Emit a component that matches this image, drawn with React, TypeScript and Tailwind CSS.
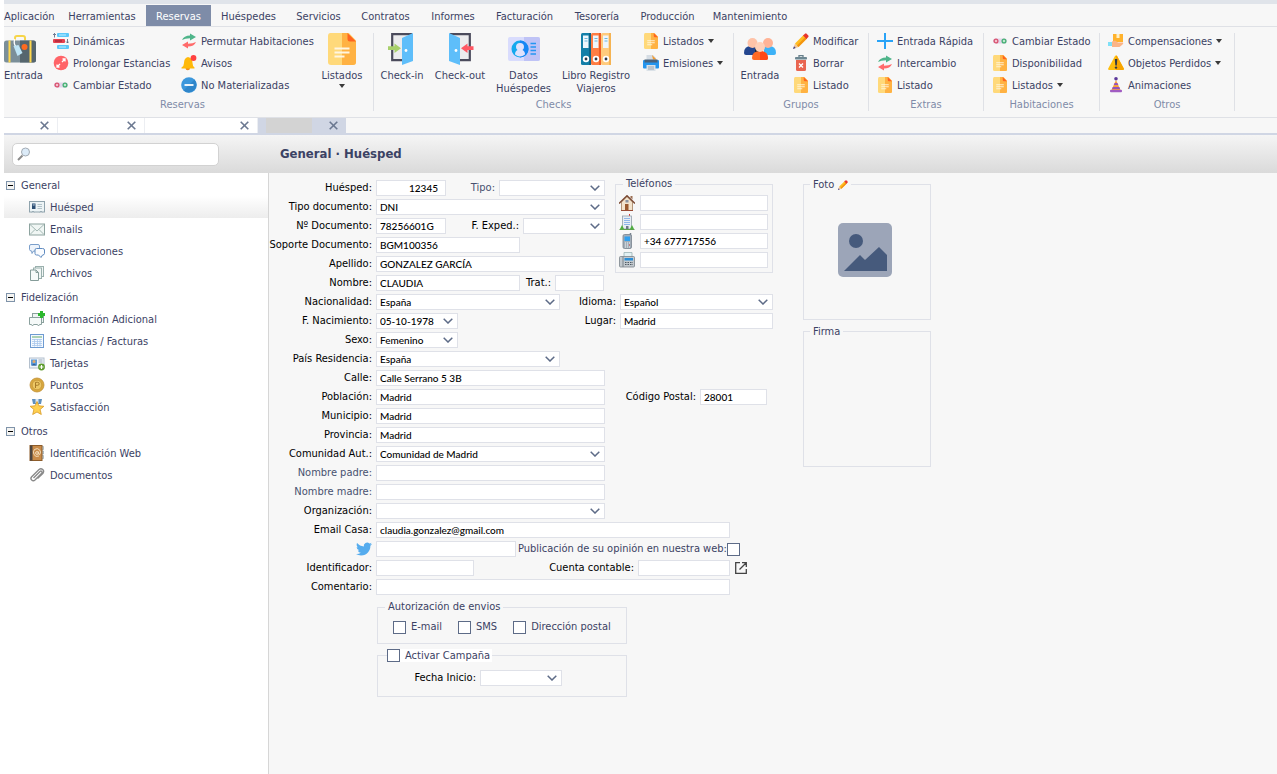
import { useState } from 'react';
import type { ReactNode } from 'react';
import clsx from 'clsx';

/* ---------- ribbon icons ---------- */

const svg16 = 'w-4 h-4 shrink-0';
const svg32 = 'w-8 h-8 shrink-0';

function SuitcaseIcon() {
  return (
    <svg viewBox="0 0 32 32" className={svg32}>
      <path d="M11 7.500V5q0-2 2-2h6q2 0 2 2v2.500" fill="none" stroke="#f6d54a" strokeWidth="2" />
      <rect x="0" y="7.500" width="32" height="22" rx="2.500" fill="#7b8f99" />
      <path d="M16 7.500h13.500q2.500 0 2.500 2.500v17q0 2.500-2.500 2.500H16z" fill="#56666e" />
      <path d="M4.500 7.500h2v22h-2zM25.500 7.500h2v22h-2z" fill="#ffd84d" />
      <path d="M11 6q-2 4 1 8" fill="none" stroke="#fff" strokeWidth="1.300" />
      <path d="M9.500 13l5-1 4 8-5 3z" fill="#bfe6f7" />
      <circle cx="20.500" cy="14" r="3" fill="#ff6a1f" />
    </svg>
  );
}

function DynamicIcon() {
  return (
    <svg viewBox="0 0 16 16" className={svg16}>
      <rect x="4" y="0" width="12" height="4" rx="1" fill="#5bc8fa" />
      <rect x="0" y="6" width="12" height="4" rx="1" fill="#e4404f" />
      <rect x="4" y="12" width="12" height="4" rx="1" fill="#5bc8fa" />
      <path d="M6 2h7M6 14h7" stroke="#c4eefe" />
      <path d="M2 8h7" stroke="#8f1f35" />
      <path d="M1.500 4.500v-4M0 2l1.500-1.500L3 2M14.500 6v4M13 8.500l1.500 1.500L16 8.500" fill="none" stroke="#4c5a78" strokeWidth=".8" />
    </svg>
  );
}

function ExpandIcon() {
  return (
    <svg viewBox="0 0 16 16" className={svg16}>
      <circle cx="8" cy="8" r="7.300" fill="#ff6468" />
      <path d="M9 7l3-3M9.500 4H12v2.500M7 9l-3 3M4 9.500V12h2.500" fill="none" stroke="#fff" strokeWidth="1.300" />
    </svg>
  );
}

function StateIcon() {
  return (
    <svg viewBox="0 0 16 16" className={svg16}>
      <rect x="1" y="5.500" width="14" height="5" rx="2.500" fill="#e3d5ec" />
      <circle cx="4" cy="8" r="1.900" fill="#f3c1cc" stroke="#d9536f" strokeWidth="1.300" />
      <circle cx="12" cy="8" r="1.900" fill="#bfe8cf" stroke="#45b074" strokeWidth="1.300" />
    </svg>
  );
}

function SwapIcon() {
  return (
    <svg viewBox="0 0 16 16" className={svg16}>
      <path d="M1 7q2-4.500 8-4.500V.5L15 4 9 7.500V5.300Q4 5.300 1 7z" fill="#4fb58a" />
      <path d="M15 9q-2 4.500-8 4.500v2L1 12l6-3.500v2.200Q12 10.700 15 9z" fill="#ff6b6b" />
    </svg>
  );
}

function BellIcon() {
  return (
    <svg viewBox="0 0 16 16" className={svg16}>
      <path d="M4.500 13H9a2.200 2.200 0 0 1-4.500 0z" fill="#f28c18" />
      <path d="M7 2Q3 3 3 8q0 3-2.500 4.500V13.500h13v-1Q11.500 11 11.500 8q0-5-4.500-6z" fill="#ffb90a" />
      <circle cx="12.500" cy="3" r="2.900" fill="#ff4141" />
    </svg>
  );
}

function MinusIcon() {
  return (
    <svg viewBox="0 0 16 16" className={svg16}>
      <circle cx="8" cy="8" r="7.800" fill="#3b97dc" />
      <path d="M2.500 13.500A7.800 7.800 0 0 0 13.500 2.500z" fill="#2f86ca" />
      <path d="M3.500 8h9" stroke="#fff" strokeWidth="1.800" />
    </svg>
  );
}

function DocIcon({ big }: { big?: boolean }) {
  return (
    <svg viewBox="0 0 32 32" className={big ? svg32 : svg16}>
      <path d="M4.500 0H23l7 7.500V29q0 3-3 3H5q-3 0-3-3V3q0-3 2.500-3z" fill="#ffd97a" />
      <path d="M16 0h6l8 8v21q0 3-3 3H16z" fill="#ffb243" />
      <path d="M21.500 0L30 8.500h-6q-2.500 0-2.500-2.500z" fill="#ff6420" />
      <path d="M8.500 15.500h15M8.500 19.500h15M8.500 23.500h10" stroke="#fff6e2" strokeWidth="1.800" />
    </svg>
  );
}

function DoorIcon({ out }: { out?: boolean }) {
  if (out) {
    return (
      <svg viewBox="0 0 32 32" className={svg32}>
        <path d="M6 1.200h19.800v26H15" fill="#ececee" stroke="#4b4b5c" strokeWidth="2.200" />
        <path d="M5 0l11 5v27L5 28z" fill="#5ebefa" />
        <circle cx="12" cy="17.500" r="1.400" fill="#fff" />
        <path d="M29.500 13.300h-6V10.500l-6.500 4.800 6.500 4.700v-3h6z" fill="#ff5763" />
      </svg>
    );
  }
  return (
    <svg viewBox="0 0 32 32" className={svg32}>
      <path d="M26 1.200H6.200v26H17" fill="#ececee" stroke="#4b4b5c" strokeWidth="2.200" />
      <path d="M27 0L16 5v27l11-4z" fill="#5ebefa" />
      <circle cx="20" cy="17.500" r="1.400" fill="#fff" />
      <path d="M2 13.300h6.500V10.500l6.500 4.800-6.500 4.700v-3H2z" fill="#a8d06b" />
    </svg>
  );
}

function GuestCardIcon() {
  return (
    <svg viewBox="0 0 32 32" className={svg32}>
      <rect y="4" width="32" height="24" rx="2" fill="#d9dcfd" />
      <path d="M16 4h14q2 0 2 2v20q0 2-2 2H16z" fill="#bfc3f6" />
      <circle cx="12" cy="16" r="8.500" fill="#15a9ee" />
      <path d="M12 7.500a8.500 8.500 0 0 1 0 17z" fill="#1686f5" />
      <path d="M7 21.500q0-3.500 2.500-4.500-1.500-1-1.500-3a4 4 0 0 1 8 0q0 2-1.500 3 2.500 1 2.500 4.500-5 4-10 0z" fill="#dfe2fc" />
      <path d="M22.500 10.500h5.500M22.500 14h5.500M22.500 17.500h5.500M22.500 21h5.500" stroke="#2496f2" strokeWidth="1.400" />
    </svg>
  );
}

function BindersIcon() {
  const binders = [
    { x: 1, fill: '#137fa8', side: '#0b6488' },
    { x: 11, fill: '#ff7d43', side: '#ee5a24' },
    { x: 21, fill: '#ffcb7d', side: '#f5b352' },
  ];
  return (
    <svg viewBox="0 0 32 32" className={svg32}>
      {binders.map((b) => (
        <g key={b.x}>
          <rect x={b.x} width="10" height="32" rx="1.500" fill={b.fill} />
          <path d={`M${b.x + 8} 0h2v32h-2z`} fill={b.side} />
          <rect x={b.x + 2} y="2.500" width="5.500" height="12.500" fill="#eef6fb" />
          <path d={`M${b.x + 3.5} 5.500h3M${b.x + 3.5} 8h3`} stroke="#4aa7d6" strokeWidth=".8" />
          <circle cx={b.x + 5} cy="26" r="2.300" fill="#333b4a" stroke="#fff" strokeWidth="1.800" />
        </g>
      ))}
    </svg>
  );
}

function PrinterIcon() {
  return (
    <svg viewBox="0 0 16 16" className={svg16}>
      <path d="M3.500 0H10l3 3v4H3.500z" fill="#d6dde4" />
      <path d="M9 0l4.500 4.500H10z" fill="#f29b30" />
      <rect x="0" y="5" width="16" height="8.500" rx="1" fill="#2495ee" />
      <rect x="1.500" y="4.500" width="13" height="3" fill="#49627c" />
      <rect x="3.500" y="10" width="9" height="6" fill="#dbe2e8" />
      <path d="M5 12h6M5 14h6" stroke="#9aa7b3" />
    </svg>
  );
}

function GroupIcon() {
  return (
    <svg viewBox="0 0 32 32" className={svg32}>
      <path d="M0 20q0-7 7-7h5v9H2q-2 0-2-2z" fill="#24468f" />
      <path d="M32 20q0-7-7-7h-5v9h10q2 0 2-2z" fill="#3db2f7" />
      <path d="M11 14l5 3-2 5h-3z" fill="#14263d" />
      <circle cx="8.500" cy="10" r="5" fill="#ffc3a8" />
      <circle cx="24" cy="10" r="5" fill="#ffb396" />
      <path d="M8 25q0-7 8-7t8 7q0 2-2 2H10q-2 0-2-2z" fill="#ff6a24" />
      <path d="M16 18q8 0 8 7 0 2-2 2h-6z" fill="#ff4716" />
      <circle cx="16" cy="14" r="5" fill="#ffd0b8" />
    </svg>
  );
}

function PencilIcon() {
  return (
    <svg viewBox="0 0 16 16" className={svg16}>
      <path d="M0 16l2-5.500L5.500 14z" fill="#f3c595" />
      <path d="M0 16l1-2.700L2.700 15z" fill="#3a3e8c" />
      <path d="M2 10.500l8.500-8.500L14 5.500 5.500 14z" fill="#ffbd22" />
      <path d="M4 12.500L12.300 4 14 5.500 5.500 14z" fill="#f49410" />
      <path d="M10 2.500L12 .7q.8-.7 1.600 0l1.700 1.700q.7.800 0 1.600L13.500 6z" fill="#e8352c" />
    </svg>
  );
}

function TrashIcon() {
  return (
    <svg viewBox="0 0 16 16" className={svg16}>
      <path d="M6 2V.7h4V2" fill="none" stroke="#667f8a" strokeWidth="1.300" />
      <rect x="2" y="2" width="12" height="2.500" rx=".8" fill="#6d8792" />
      <path d="M3 5h10v9.500q0 1.500-1.500 1.500h-7Q3 16 3 14.500z" fill="#e96550" />
      <path d="M6 8.500l4 4M10 8.500l-4 4" stroke="#fff" strokeWidth="1.300" />
    </svg>
  );
}

function PlusIcon() {
  return (
    <svg viewBox="0 0 16 16" className={svg16}>
      <path d="M8 0v16M0 8h16" stroke="#29a3f7" strokeWidth="2" />
    </svg>
  );
}

function HandBoxIcon() {
  return (
    <svg viewBox="0 0 16 16" className={svg16}>
      <rect x="5" y="1" width="10" height="8" fill="#ffb22c" />
      <path d="M8.500 1h3v4h-3z" fill="#fff0c8" />
      <path d="M0 9h4v4H0z" fill="#7fe0f7" />
      <path d="M4 8.500l3-1 3 2h5q1 1-1 2.500L11.500 14H4z" fill="#fbb487" />
    </svg>
  );
}

function WarningIcon() {
  return (
    <svg viewBox="0 0 16 16" className={svg16}>
      <path d="M8 .5q.8 0 1.300.9l6.500 12q.5 1.600-1 1.600H1.200q-1.500 0-1-1.600l6.500-12Q7.200.5 8 .5z" fill="#ffbe0d" />
      <path d="M8 .5q.8 0 1.300.9l6.500 12q.5 1.600-1 1.600H8z" fill="#f8a400" />
      <path d="M6.800 4h2.500l-.5 6.500H7.300z" fill="#333b46" />
      <circle cx="8" cy="12.600" r="1.200" fill="#333b46" />
    </svg>
  );
}

function HatIcon() {
  return (
    <svg viewBox="0 0 16 16" className={svg16}>
      <circle cx="8" cy="1.800" r="1.800" fill="#5d3a9b" />
      <path d="M8 3l4.500 10h-9z" fill="#f7a13a" />
      <path d="M6.700 6h2.700l1 2H5.700zM4.800 10h6.500l.8 2H4z" fill="#9553b8" />
      <rect x="2" y="12.800" width="12" height="2.500" rx="1" fill="#a15cc2" />
    </svg>
  );
}

/* ---------- sidebar icons ---------- */

function IdCardIcon() {
  return (
    <svg viewBox="0 0 16 16" className={svg16}>
      <rect x=".5" y="2.500" width="15" height="10.500" fill="#edf4f6" stroke="#8fa3ad" />
      <path d="M3 4.500h3.500V10H3z" fill="#2d4f74" />
      <circle cx="4.700" cy="5.700" r="1.200" fill="#7b96b0" />
      <path d="M8.500 5.500H13M8.500 7.500H13M8.500 9.500H13" stroke="#b3c3ca" />
      <path d="M3 13.500l1-1.500 1 1.500M11 13.500l1-1.500 1 1.500" fill="#fff" stroke="#8fa3ad" />
    </svg>
  );
}

function EnvelopeIcon() {
  return (
    <svg viewBox="0 0 16 16" className={svg16}>
      <rect x=".5" y="3" width="15" height="11" fill="#f0f6f4" stroke="#8da39f" />
      <path d="M1 3.500l7 6.500 7-6.500M1 13.500L6 8.500M15 13.500L10 8.500" fill="none" stroke="#a4b8b4" />
    </svg>
  );
}

function ChatIcon() {
  return (
    <svg viewBox="0 0 16 16" className={svg16}>
      <path d="M2 1.500h7q1.500 0 1.500 1.500v3.500Q10.500 8 9 8H4.500L3 10.500 2.700 8Q.5 8 .5 6.500V3Q.5 1.500 2 1.500z" fill="#eef4fb" stroke="#7b9fcb" />
      <path d="M7.500 5.500h6q2 0 2 1.500v3.500q0 1.500-2 1.500L12 14.500 9.500 12h-2Q6 12 6 10.500V7q0-1.500 1.500-1.500z" fill="#fafcff" stroke="#5f8bc0" />
    </svg>
  );
}

function FilesIcon() {
  return (
    <svg viewBox="0 0 16 16" className={svg16}>
      <rect x="6.500" y="1.500" width="8" height="10" fill="#f1f6f5" stroke="#9ab0ad" />
      <rect x="4.500" y="3" width="8" height="10.500" fill="#f1f6f5" stroke="#9ab0ad" />
      <path d="M1.500 5h5.500l2.500 2.500v8h-8z" fill="#f6faf9" stroke="#859c99" />
      <path d="M7 5v2.500h2.500" fill="none" stroke="#859c99" />
    </svg>
  );
}

function InfoAddIcon() {
  return (
    <svg viewBox="0 0 16 16" className={svg16}>
      <rect x="3.500" y="2.500" width="11" height="9" fill="#eef4f3" stroke="#8ba19e" />
      <path d="M.5 6.500h12v7h-2l-1 1.500-1-1.500h-4l-1 1.500-1-1.500h-2z" fill="#f5f9f8" stroke="#8ba19e" />
      <path d="M11 0h3v2h2v3h-2v2h-3V5H9V2h2z" fill="#2db82f" />
    </svg>
  );
}

function TableIcon() {
  return (
    <svg viewBox="0 0 16 16" className={svg16}>
      <rect x="1.500" y="1.500" width="13" height="13" fill="#f4f9ff" stroke="#6e9bd1" />
      <path d="M3 4h10" stroke="#94c59b" strokeWidth="1.500" />
      <path d="M3 6.500h10M3 8.500h10M3 10.500h10M3 12.500h10M5.500 6v7.500M8.500 6v7.500M11 6v7.500" stroke="#a9c8ec" strokeWidth=".8" />
    </svg>
  );
}

function CardsIcon() {
  return (
    <svg viewBox="0 0 16 16" className={svg16}>
      <rect x=".5" y="3" width="14.500" height="10" fill="#f0f5fa" stroke="#b4c0cd" />
      <rect x="2" y="4.500" width="6" height="6" fill="#5a9ad8" />
      <circle cx="5" cy="6.500" r="1.500" fill="#e0a86c" />
      <path d="M2.500 10.500q2.500-3.500 5 0z" fill="#2f5e96" />
      <path d="M9.500 5h4M9.500 7h4" stroke="#9cabba" />
      <circle cx="12.500" cy="12" r="3.400" fill="#5f9c2f" />
      <path d="M12.500 10v4M10.500 12h4" stroke="#fff" strokeWidth="1.200" />
    </svg>
  );
}

function CoinIcon() {
  return (
    <svg viewBox="0 0 16 16" className={svg16}>
      <circle cx="8" cy="8" r="7" fill="#d9a83d" stroke="#c09138" strokeWidth=".8" />
      <circle cx="8" cy="8" r="4.800" fill="#ecc765" stroke="#c4953a" strokeWidth=".8" />
      <path d="M6.500 11V5.300h2q1.700 0 1.700 1.500T8.500 8.300h-2" fill="none" stroke="#a87a28" />
    </svg>
  );
}

function MedalIcon() {
  return (
    <svg viewBox="0 0 16 16" className={svg16}>
      <path d="M3 0h10l-1 5H4z" fill="#5e8fbf" />
      <path d="M6.500 0h3v4h-3z" fill="#d9e6f2" />
      <path d="M8 2.500l1.900 4.300 5 .5-3.800 3.200 1.200 5L8 13l-4.300 2.500 1.200-5L1.100 7.300l5-.5z" fill="#ffd050" stroke="#d89a26" strokeWidth=".8" />
    </svg>
  );
}

function AddressBookIcon() {
  return (
    <svg viewBox="0 0 16 16" className={svg16}>
      <path d="M12 1.500h2.500v3H12zM12 6h2.500v3H12zM12 10.500h2.500v3H12z" fill="#cdd6da" stroke="#8fa0a8" strokeWidth=".6" />
      <rect x="1" y=".5" width="12" height="15" fill="#c98c4a" stroke="#8d5c2a" />
      <path d="M1 .5h2.500v15H1z" fill="#4d4640" />
      <path d="M10 11q-3.500 1.500-5-1.500t.5-5q3-2 5 .3t.3 4.500q-1 .8-1.500-.8V6.500" fill="none" stroke="#f7e5c6" strokeWidth=".9" />
      <circle cx="8" cy="8" r="1.400" fill="none" stroke="#f7e5c6" strokeWidth=".9" />
    </svg>
  );
}

function ClipIcon() {
  return (
    <svg viewBox="0 0 16 16" className={svg16}>
      <path d="M4.500 11L11 4.500q1-.8 1.700 0t0 1.700L6 13q-1.700 1.500-3.300 0t0-3.300L10 2.500q2-1.500 3.700 0t.3 3.700L8.500 11.500" fill="none" stroke="#8a8a8a" strokeWidth="1.400" />
    </svg>
  );
}

/* ---------- phone icons ---------- */

function HouseIcon() {
  return (
    <svg viewBox="0 0 16 16" className={svg16}>
      <path d="M2.500 7L8 1.500 13.500 7v8.500h-11z" fill="#f3e3cc" stroke="#a3805f" strokeWidth=".8" />
      <path d="M0 8.500L8 .8l8 7.700" fill="none" stroke="#7b4a33" strokeWidth="1.500" />
      <path d="M11.500 1h2v3.500l-2-2z" fill="#9c6f52" />
      <rect x="6" y="9" width="3.500" height="6.500" fill="#9a5a2f" />
      <rect x="6.500" y="5" width="3" height="2.500" fill="#8b94a0" />
      <path d="M2 15.500h12" stroke="#9a4b35" />
    </svg>
  );
}

function OfficeIcon() {
  return (
    <svg viewBox="0 0 16 16" className={svg16}>
      <path d="M10.500 0v2" stroke="#d33" />
      <rect x="3.500" y="2" width="9" height="13" fill="#e8edf3" stroke="#95a0ac" strokeWidth=".8" />
      <path d="M5 4.500h6M5 6.500h6M5 8.500h6M5 10.500h6" stroke="#8fb6ea" />
      <path d="M7 12h2.500v3H7z" fill="#6c7886" />
      <path d="M1 15l2-4 2 4zM11 15l2-4 2 4z" fill="#4fae3f" />
      <path d="M.5 15.500h15" stroke="#5ca14b" />
    </svg>
  );
}

function MobileIcon() {
  return (
    <svg viewBox="0 0 16 16" className={svg16}>
      <path d="M11.500 0v3" stroke="#76828d" strokeWidth="1.500" />
      <rect x="4" y="1.500" width="8.500" height="14" rx="1.500" fill="#a3aeb8" stroke="#76828d" strokeWidth=".8" />
      <rect x="5.500" y="3.500" width="5.500" height="4.500" fill="#2fa0f0" />
      <path d="M6 10h1M8 10h1M10 10h1M6 12h1M8 12h1M6 14h1M8 14h1M10 14h1" stroke="#eef2f5" />
      <path d="M10 12h1" stroke="#e04d4d" />
    </svg>
  );
}

function FaxIcon() {
  return (
    <svg viewBox="0 0 16 16" className={svg16}>
      <path d="M5 .5h8V6H5z" fill="#e3f1f3" stroke="#9ab2b5" strokeWidth=".8" />
      <rect x=".5" y="4.500" width="15" height="10.500" rx="1" fill="#c3c9ce" stroke="#7b848b" strokeWidth=".8" />
      <path d="M4 4.500v10.500" stroke="#7b848b" />
      <rect x="5.500" y="6" width="8.500" height="2.500" fill="#2c8fd6" />
      <path d="M6 10.500h8M6 12.500h8" stroke="#4f5a63" strokeDasharray="1.500 1" />
    </svg>
  );
}

/* ---------- small shared parts ---------- */

function Caret() {
  return (
    <svg viewBox="0 0 6 4" className="w-1.5 h-1 shrink-0" fill="#3a3a3a">
      <path d="M0 0h6L3 4z" />
    </svg>
  );
}

function CloseX() {
  return (
    <svg viewBox="0 0 9 9" className="w-[9px] h-[9px]" fill="none" stroke="#6b7890" strokeWidth="1.600">
      <path d="M.7.7l7.600 7.600M8.300.7L.7 8.300" />
    </svg>
  );
}

function BigButton({ icon, lines, caret, className }: { icon: ReactNode; lines: string[]; caret?: boolean; className: string }) {
  return (
    <button type="button" className={clsx('flex flex-col shrink-0', className)}>
      {icon}
      <span className="flex flex-col items-center mt-1 leading-[13px] whitespace-nowrap">
        {lines.map((line) => (
          <span key={line}>{line}</span>
        ))}
        {caret && (
          <span className="mt-0.5">
            <Caret />
          </span>
        )}
      </span>
    </button>
  );
}

type SmallItem = { label: string; icon: ReactNode; caret?: boolean };

function SmallColumn({ items, className }: { items: SmallItem[]; className?: string }) {
  return (
    <div className={clsx('flex flex-col gap-1.5 shrink-0', className)}>
      {items.map((item) => (
        <button key={item.label} type="button" className="flex items-center gap-1 h-4 whitespace-nowrap">
          {item.icon}
          <span className="pt-px">{item.label}</span>
          {item.caret && <Caret />}
        </button>
      ))}
    </div>
  );
}

function RibbonGroup({ title, className, children }: { title: string; className: string; children: ReactNode }) {
  return (
    <section className={clsx('flex flex-col justify-between shrink-0 h-[78px] border-r border-[#dfe1e6]', className)}>
      <div className="flex h-16">{children}</div>
      <h2 className="text-center leading-3 text-[#7f8ba8]">{title}</h2>
    </section>
  );
}

const menuItems = [
  { label: 'Aplicación', width: 'w-[54px]' },
  { label: 'Herramientas', width: 'w-[88px]' },
  { label: 'Reservas', width: 'w-[65px]' },
  { label: 'Huéspedes', width: 'w-[75px]' },
  { label: 'Servicios', width: 'w-[65px]' },
  { label: 'Contratos', width: 'w-[69px]' },
  { label: 'Informes', width: 'w-[66px]' },
  { label: 'Facturación', width: 'w-[77px]' },
  { label: 'Tesorería', width: 'w-[68px]' },
  { label: 'Producción', width: 'w-[73px]' },
  { label: 'Mantenimiento', width: 'w-[92px]' },
];

function MenuBar() {
  return (
    <nav className="flex pt-px border-b border-[#dfe1e6]">
      {menuItems.map((item) => (
        <button
          key={item.label}
          type="button"
          className={clsx(
            'h-[21px] pt-0.5 shrink-0 first:text-left',
            item.width,
            item.label === 'Reservas' && 'bg-[#7e8ca8] text-white'
          )}
        >
          {item.label}
        </button>
      ))}
    </nav>
  );
}

function Ribbon() {
  return (
    <div className="flex py-1.5 border-b border-[#dfe1e6]">
      <RibbonGroup title="Reservas" className="w-[370px] [&>h2]:pr-3">
        <BigButton icon={<SuitcaseIcon />} lines={['Entrada']} className="w-11 items-start" />
        <SmallColumn
          className="ml-[5px] w-32"
          items={[
            { label: 'Dinámicas', icon: <DynamicIcon /> },
            { label: 'Prolongar Estancias', icon: <ExpandIcon /> },
            { label: 'Cambiar Estado', icon: <StateIcon /> },
          ]}
        />
        <SmallColumn
          className="w-32"
          items={[
            { label: 'Permutar Habitaciones', icon: <SwapIcon /> },
            { label: 'Avisos', icon: <BellIcon /> },
            { label: 'No Materializadas', icon: <MinusIcon /> },
          ]}
        />
        <BigButton icon={<DocIcon big />} lines={['Listados']} caret className="ml-[5px] w-14 items-center" />
      </RibbonGroup>
      <RibbonGroup title="Checks" className="w-[360px]">
        <BigButton icon={<DoorIcon />} lines={['Check-in']} className="w-14 items-center" />
        <BigButton icon={<DoorIcon out />} lines={['Check-out']} className="w-[60px] items-center" />
        <BigButton icon={<GuestCardIcon />} lines={['Datos', 'Huéspedes']} className="w-[67px] items-center" />
        <BigButton icon={<BindersIcon />} lines={['Libro Registro', 'Viajeros']} className="w-[78px] items-center" />
        <SmallColumn
          className="ml-2"
          items={[
            { label: 'Listados', icon: <DocIcon />, caret: true },
            { label: 'Emisiones', icon: <PrinterIcon />, caret: true },
          ]}
        />
      </RibbonGroup>
      <RibbonGroup title="Grupos" className="w-[135px]">
        <BigButton icon={<GroupIcon />} lines={['Entrada']} className="w-[52px] items-center" />
        <SmallColumn
          className="ml-[7px]"
          items={[
            { label: 'Modificar', icon: <PencilIcon /> },
            { label: 'Borrar', icon: <TrashIcon /> },
            { label: 'Listado', icon: <DocIcon /> },
          ]}
        />
      </RibbonGroup>
      <RibbonGroup title="Extras" className="w-[115px]">
        <SmallColumn
          className="ml-2"
          items={[
            { label: 'Entrada Rápida', icon: <PlusIcon /> },
            { label: 'Intercambio', icon: <SwapIcon /> },
            { label: 'Listado', icon: <DocIcon /> },
          ]}
        />
      </RibbonGroup>
      <RibbonGroup title="Habitaciones" className="w-[116px]">
        <SmallColumn
          className="ml-2"
          items={[
            { label: 'Cambiar Estado', icon: <StateIcon /> },
            { label: 'Disponibilidad', icon: <DocIcon /> },
            { label: 'Listados', icon: <DocIcon />, caret: true },
          ]}
        />
      </RibbonGroup>
      <RibbonGroup title="Otros" className="w-[135px]">
        <SmallColumn
          className="ml-2"
          items={[
            { label: 'Compensaciones', icon: <HandBoxIcon />, caret: true },
            { label: 'Objetos Perdidos', icon: <WarningIcon />, caret: true },
            { label: 'Animaciones', icon: <HatIcon /> },
          ]}
        />
      </RibbonGroup>
    </div>
  );
}

function WindowTabs() {
  return (
    <div className="flex h-[17px] border-b-2 border-[#d0d6e4]">
      {['w-[54px]', 'w-[87px]', 'w-[113px]'].map((width) => (
        <div key={width} className={clsx('flex items-center justify-end pr-2 bg-white border-r border-[#eceef2]', width)}>
          <button type="button" aria-label="Cerrar pestaña">
            <CloseX />
          </button>
        </div>
      ))}
      <div className="flex items-center justify-between w-[88px] px-2 bg-[#d0d6e4]">
        <span className="w-[46px] h-full bg-[#d3d3d3]" />
        <button type="button" aria-label="Cerrar pestaña">
          <CloseX />
        </button>
      </div>
    </div>
  );
}

/* ---------- sidebar tree ---------- */

const tree = [
  {
    title: 'General',
    items: [
      { label: 'Huésped', icon: <IdCardIcon /> },
      { label: 'Emails', icon: <EnvelopeIcon /> },
      { label: 'Observaciones', icon: <ChatIcon /> },
      { label: 'Archivos', icon: <FilesIcon /> },
    ],
  },
  {
    title: 'Fidelización',
    items: [
      { label: 'Información Adicional', icon: <InfoAddIcon /> },
      { label: 'Estancias / Facturas', icon: <TableIcon /> },
      { label: 'Tarjetas', icon: <CardsIcon /> },
      { label: 'Puntos', icon: <CoinIcon /> },
      { label: 'Satisfacción', icon: <MedalIcon /> },
    ],
  },
  {
    title: 'Otros',
    items: [
      { label: 'Identificación Web', icon: <AddressBookIcon /> },
      { label: 'Documentos', icon: <ClipIcon /> },
    ],
  },
];

function Sidebar() {
  const [selected, setSelected] = useState('Huésped');

  return (
    <aside className="flex flex-col gap-0.5 w-[265px] shrink-0 pt-px bg-white border-r border-[#d6d6d6]">
      {tree.map((group) => (
        <div key={group.title}>
          <button type="button" className="flex items-center gap-1.5 w-full h-[22px] pl-0.5">
            <svg viewBox="0 0 9 9" className="w-[9px] h-[9px]">
              <rect x=".5" y=".5" width="8" height="8" fill="#f4f4f2" stroke="#7f93a9" />
              <path d="M2 4.500h5" stroke="#000" />
            </svg>
            <span className="pt-px">{group.title}</span>
          </button>
          {group.items.map((item) => (
            <button
              key={item.label}
              type="button"
              onClick={() => setSelected(item.label)}
              className={clsx(
                'flex items-center gap-[5px] w-full h-[22px] pl-[25px]',
                selected === item.label && 'bg-linear-to-b from-white to-[#ededed]'
              )}
            >
              {item.icon}
              <span className="pt-px">{item.label}</span>
            </button>
          ))}
        </div>
      ))}
    </aside>
  );
}

/* ---------- form parts ---------- */

const box = "h-4 min-w-0 bg-white border border-[#dfe1e8] px-[3px] font-['Lato',sans-serif] text-[10px] font-medium text-black rounded-none outline-none";

function Text({ id, value, width, right, label }: { id: string; value?: string; width: string; right?: boolean; label?: string }) {
  return (
    <input
      id={id}
      type="text"
      defaultValue={value}
      aria-label={label}
      className={clsx(box, 'shrink-0', width, right && 'text-right pr-[7px]')}
    />
  );
}

function Select({ id, value = '', width }: { id: string; value?: string; width: string }) {
  return (
    <span className={clsx('grid items-center shrink-0', width)}>
      <select id={id} defaultValue={value} className={clsx(box, 'col-start-1 row-start-1 w-full appearance-none')}>
        <option value={value}>{value}</option>
      </select>
      <svg
        viewBox="0 0 10 6"
        className="col-start-1 row-start-1 justify-self-end w-2.5 h-1.5 mr-[5px] pointer-events-none"
        fill="none"
        stroke="#5d6b87"
        strokeWidth="1.500"
      >
        <path d="M.7.7L5 5 9.300.7" />
      </svg>
    </span>
  );
}

function Label({ htmlFor, children, dim, width = 'w-[103px]' }: { htmlFor: string; children: ReactNode; dim?: boolean; width?: string }) {
  return (
    <label htmlFor={htmlFor} className={clsx('shrink-0 mr-1 text-right whitespace-nowrap', width, dim ? 'text-[#47516f]' : 'text-black')}>
      {children}
    </label>
  );
}

function Row({ children }: { children: ReactNode }) {
  return <div className="flex items-center h-4">{children}</div>;
}

function Check({ id, label }: { id: string; label?: string }) {
  return (
    <span className="flex items-center gap-[5px] shrink-0">
      <input id={id} type="checkbox" className="appearance-none w-[13px] h-[13px] bg-white border border-[#5d6b87] checked:bg-[#5d6b87]" />
      {label && <label htmlFor={id} className="whitespace-nowrap">{label}</label>}
    </span>
  );
}

const phones = [
  { id: 'tel-casa', label: 'Teléfono casa', icon: <HouseIcon />, value: '' },
  { id: 'tel-trabajo', label: 'Teléfono trabajo', icon: <OfficeIcon />, value: '' },
  { id: 'tel-movil', label: 'Móvil', icon: <MobileIcon />, value: '+34 677717556' },
  { id: 'fax', label: 'Fax', icon: <FaxIcon />, value: '' },
];

function GuestForm() {
  return (
    <form className="flex flex-col gap-[3px] w-[504px] shrink-0 pt-[7px]">
      <div className="flex gap-2.5">
        <div className="flex flex-col gap-[3px] w-[336px] shrink-0">
          <Row>
            <Label htmlFor="huesped">Huésped:</Label>
            <Text id="huesped" value="12345" width="w-[70px]" right />
            <Label htmlFor="tipo" dim width="w-[49px]">Tipo:</Label>
            <Select id="tipo" width="w-[106px]" />
          </Row>
          <Row>
            <Label htmlFor="tipo-doc">Tipo documento:</Label>
            <Select id="tipo-doc" value="DNI" width="w-[229px]" />
          </Row>
          <Row>
            <Label htmlFor="num-doc">Nº Documento:</Label>
            <Text id="num-doc" value="78256601G" width="w-[70px]" />
            <Label htmlFor="exped" width="w-[73px]">F. Exped.:</Label>
            <Select id="exped" width="w-[82px]" />
          </Row>
          <Row>
            <Label htmlFor="soporte">Soporte Documento:</Label>
            <Text id="soporte" value="BGM100356" width="w-36" />
          </Row>
          <Row>
            <Label htmlFor="apellido">Apellido:</Label>
            <Text id="apellido" value="GONZALEZ GARCÍA" width="w-[229px]" />
          </Row>
          <Row>
            <Label htmlFor="nombre">Nombre:</Label>
            <Text id="nombre" value="CLAUDIA" width="w-36" />
            <Label htmlFor="trat" width="w-[31px]">Trat.:</Label>
            <Text id="trat" width="w-[49px]" />
          </Row>
        </div>
        <fieldset className="self-start w-[158px] h-[95px] -mt-0.5 px-[3px] border border-[#dfe1e8]">
          <legend className="ml-1 px-[3px] leading-3">Teléfonos</legend>
          <div className="flex flex-col gap-[3px] pt-[5px]">
            {phones.map((p) => (
              <div key={p.id} className="flex items-center gap-[5px]">
                {p.icon}
                <Text id={p.id} label={p.label} value={p.value} width="w-32" />
              </div>
            ))}
          </div>
        </fieldset>
      </div>

      <Row>
        <Label htmlFor="nacionalidad">Nacionalidad:</Label>
        <Select id="nacionalidad" value="España" width="w-[184px]" />
        <Label htmlFor="idioma" width="w-14">Idioma:</Label>
        <Select id="idioma" value="Español" width="w-[153px]" />
      </Row>
      <Row>
        <Label htmlFor="nacimiento">F. Nacimiento:</Label>
        <Select id="nacimiento" value="05-10-1978" width="w-[82px]" />
        <Label htmlFor="lugar" width="w-[158px]">Lugar:</Label>
        <Text id="lugar" value="Madrid" width="w-[153px]" />
      </Row>
      <Row>
        <Label htmlFor="sexo">Sexo:</Label>
        <Select id="sexo" value="Femenino" width="w-[82px]" />
      </Row>
      <Row>
        <Label htmlFor="residencia">País Residencia:</Label>
        <Select id="residencia" value="España" width="w-[184px]" />
      </Row>
      <Row>
        <Label htmlFor="calle">Calle:</Label>
        <Text id="calle" value="Calle Serrano 5 3B" width="w-[229px]" />
      </Row>
      <Row>
        <Label htmlFor="poblacion">Población:</Label>
        <Text id="poblacion" value="Madrid" width="w-[229px]" />
        <Label htmlFor="cp" width="w-[91px]">Código Postal:</Label>
        <Text id="cp" value="28001" width="w-[67px]" />
      </Row>
      <Row>
        <Label htmlFor="municipio">Municipio:</Label>
        <Text id="municipio" value="Madrid" width="w-[229px]" />
      </Row>
      <Row>
        <Label htmlFor="provincia">Provincia:</Label>
        <Text id="provincia" value="Madrid" width="w-[229px]" />
      </Row>
      <Row>
        <Label htmlFor="comunidad">Comunidad Aut.:</Label>
        <Select id="comunidad" value="Comunidad de Madrid" width="w-[229px]" />
      </Row>
      <Row>
        <Label htmlFor="padre" dim>Nombre padre:</Label>
        <Text id="padre" width="w-[229px]" />
      </Row>
      <Row>
        <Label htmlFor="madre" dim>Nombre madre:</Label>
        <Text id="madre" width="w-[229px]" />
      </Row>
      <Row>
        <Label htmlFor="organizacion">Organización:</Label>
        <Select id="organizacion" width="w-[229px]" />
      </Row>
      <Row>
        <Label htmlFor="email-casa">Email Casa:</Label>
        <Text id="email-casa" value="claudia.gonzalez@gmail.com" width="w-[354px]" />
      </Row>
      <Row>
        <Label htmlFor="twitter">
          <svg viewBox="0 0 24 24" className="inline w-4 h-4" fill="#55acee" role="img" aria-label="Twitter">
            <path d="M23.950 4.570a10 10 0 0 1-2.820.780 4.960 4.960 0 0 0 2.160-2.720c-.950.560-2 .960-3.130 1.180a4.920 4.920 0 0 0-8.380 4.480C7.690 8.100 4.070 6.130 1.640 3.160a4.820 4.820 0 0 0-.670 2.480c0 1.710.870 3.210 2.190 4.100a4.900 4.900 0 0 1-2.230-.620v.060a4.920 4.920 0 0 0 3.950 4.830 5 5 0 0 1-2.210.080 4.940 4.940 0 0 0 4.600 3.420A9.870 9.870 0 0 1 0 19.540a14 14 0 0 0 7.550 2.210c9.050 0 14-7.500 14-13.990 0-.210 0-.420-.020-.630a9.940 9.940 0 0 0 2.420-2.560z" />
          </svg>
        </Label>
        <Text id="twitter" width="w-[140px]" />
        <label htmlFor="opinion" className="shrink-0 ml-0.5 whitespace-nowrap">Publicación de su opinión en nuestra web:</label>
        <Check id="opinion" />
      </Row>
      <Row>
        <Label htmlFor="identificador">Identificador:</Label>
        <Text id="identificador" width="w-[98px]" />
        <Label htmlFor="cuenta" width="w-40">Cuenta contable:</Label>
        <Text id="cuenta" width="w-[92px]" />
        <button type="button" aria-label="Abrir cuenta" className="ml-[5px] shrink-0">
          <svg viewBox="0 0 12 12" className="w-3 h-3" fill="none" stroke="#444" strokeWidth="1.300">
            <path d="M5 .7H.7v10.600h10.600V7M7 .7h4.300V5M11 1L4.500 7.500" />
          </svg>
        </button>
      </Row>
      <Row>
        <Label htmlFor="comentario">Comentario:</Label>
        <Text id="comentario" width="w-[354px]" />
      </Row>

      <fieldset className="w-[250px] h-[43px] ml-[108px] mt-[3px] pl-[15px] border border-[#dfe1e8]">
        <legend className="-ml-2 px-[3px] leading-3">Autorización de envios</legend>
        <div className="flex gap-4 pt-[7px]">
          <Check id="env-email" label="E-mail" />
          <Check id="env-sms" label="SMS" />
          <Check id="env-postal" label="Dirección postal" />
        </div>
      </fieldset>

      <fieldset className="w-[250px] h-12 ml-[108px] mt-0.5 px-[9px] border border-[#dfe1e8]">
        <legend className="bg-white pr-0.5 leading-3">
          <Check id="campana" label="Activar Campaña" />
        </legend>
        <div className="flex items-center pt-2">
          <Label htmlFor="fecha-inicio" width="w-[89px]">Fecha Inicio:</Label>
          <Select id="fecha-inicio" width="w-[82px]" />
        </div>
      </fieldset>
    </form>
  );
}

function PhotoColumn() {
  return (
    <div className="flex flex-col gap-1 shrink-0 w-32 ml-[30px] pt-1">
      <fieldset className="h-[143px] border border-[#dfe1e8]">
        <legend className="flex items-center gap-1 ml-1.5 px-[3px] pt-0.5 leading-3">
          Foto
          <button type="button" aria-label="Editar foto" className="[&>svg]:w-2.5 [&>svg]:h-2.5">
            <PencilIcon />
          </button>
        </legend>
        <div className="flex justify-center pr-1 pt-8">
          <svg viewBox="0 0 54 54" className="w-[54px] h-[54px]">
            <rect width="54" height="54" rx="5" fill="#9ca5b8" />
            <circle cx="18" cy="18" r="7" fill="#465a7c" />
            <path d="M6 48L22 32l5 5 14-13 8 8v16z" fill="#465a7c" />
          </svg>
        </div>
      </fieldset>
      <fieldset className="h-[143px] border border-[#dfe1e8]">
        <legend className="ml-1.5 px-[3px] pt-0.5 leading-3">Firma</legend>
      </fieldset>
    </div>
  );
}

export default function App() {
  return (
    <div className="min-h-screen pl-1 bg-white overflow-hidden">
      <div className="flex flex-col min-h-screen bg-[#f7f7f7] font-['DejaVu_Sans_Condensed',sans-serif] text-[11px] leading-[14px] text-[#3b4264]">
        <div className="h-1 bg-[#e0e4ea]" />
        <MenuBar />
        <Ribbon />
        <WindowTabs />
        <header className="flex items-center h-[38px] pl-2 bg-linear-to-b from-[#f5f5f5] to-[#dadada]">
          <div className="flex items-center gap-1 w-[207px] h-[23px] px-1 bg-white border border-[#d2d2d2] rounded-[5px]">
            <svg viewBox="0 0 14 14" className="w-3.5 h-3.5 shrink-0">
              <path d="M1 13l4.500-4.500" stroke="#8b8b8b" strokeWidth="2" />
              <circle cx="8.500" cy="5" r="4" fill="#dcebf8" stroke="#a3abb4" />
            </svg>
            <input type="search" aria-label="Buscar" className="w-full bg-transparent outline-none" />
          </div>
          <h1 className="ml-[61px] text-[13px] font-bold">General · Huésped</h1>
        </header>
        <div className="flex grow">
          <Sidebar />
          <main className="flex grow">
            <GuestForm />
            <PhotoColumn />
          </main>
        </div>
      </div>
    </div>
  );
}
